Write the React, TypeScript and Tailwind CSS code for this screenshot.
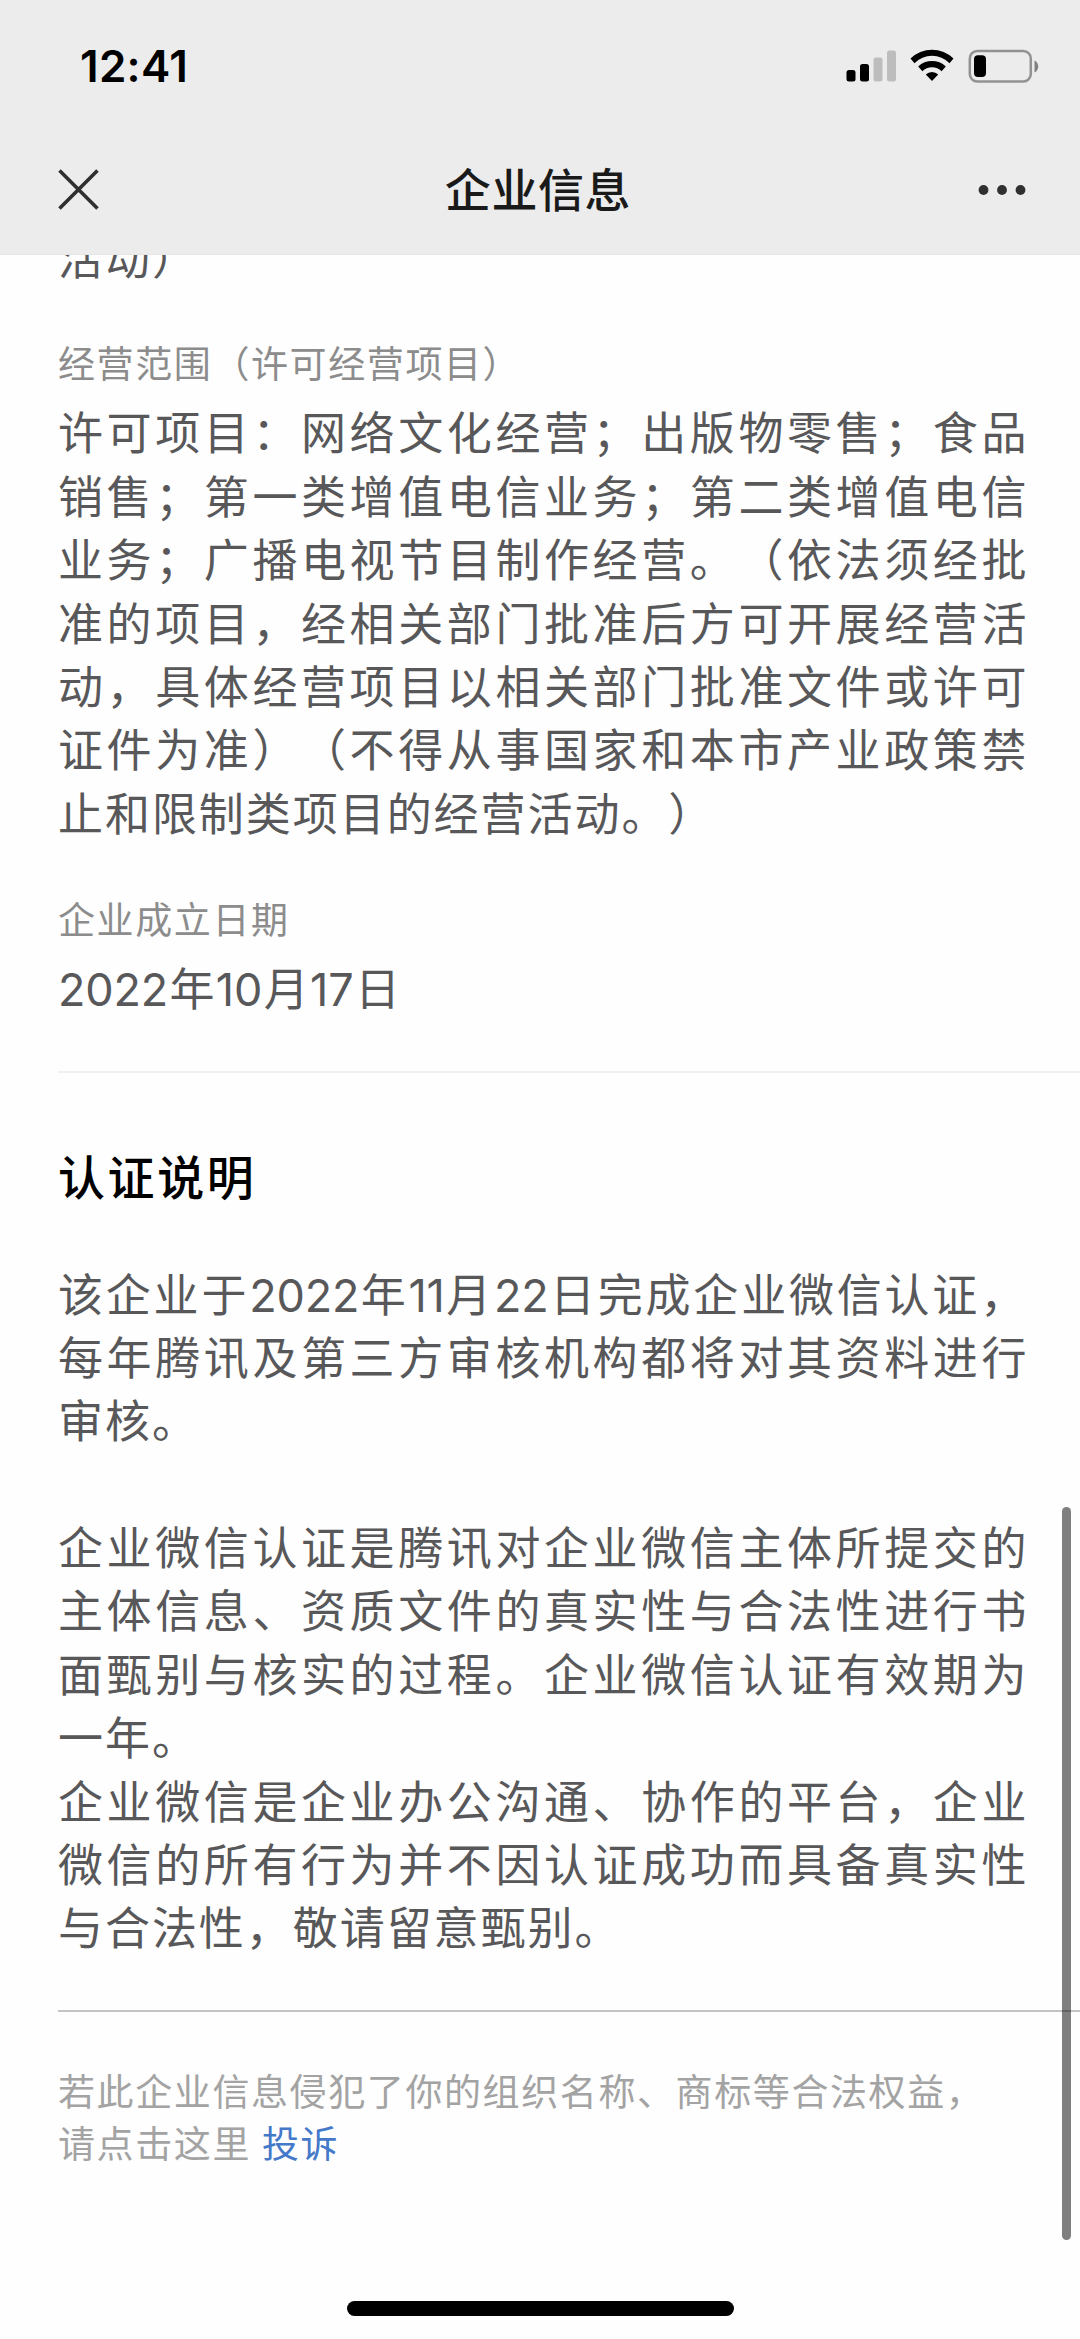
const scope = [
  '许可项目：网络文化经营；出版物零售；食品',
  '销售；第一类增值电信业务；第二类增值电信',
  '业务；广播电视节目制作经营。（依法须经批',
  '准的项目，经相关部门批准后方可开展经营活',
  '动，具体经营项目以相关部门批准文件或许可',
  '证件为准）（不得从事国家和本市产业政策禁',
];

const process = [
  '企业微信认证是腾讯对企业微信主体所提交的',
  '主体信息、资质文件的真实性与合法性进行书',
  '面甄别与核实的过程。企业微信认证有效期为',
];

const platform = [
  '企业微信是企业办公沟通、协作的平台，企业',
  '微信的所有行为并不因认证成功而具备真实性',
];

function Full({ children }: { children: string }) {
  return <span className="block tracking-[3.6px]">{children}</span>;
}

/** The closing line of a paragraph, set at its natural width. */
function Last({ children }: { children: string }) {
  return <span className="block tracking-[1.95px]">{children}</span>;
}

/** Digits inside Chinese text, with tighter tracking. */
function Num({ children }: { children: string }) {
  return <span className="mr-[1.5px] tracking-[-0.2px]">{children}</span>;
}

function StatusBar() {
  return (
    <div className="flex h-[132px] items-center justify-between pl-[80px] pr-[40px]">
      <span className="text-[44px] font-semibold leading-none tracking-[0.3px] text-black">12:41</span>
      <svg width="194" height="36" viewBox="0 0 194 36" fill="none">
        <rect x="0.500" y="22" width="9" height="11.500" rx="2.500" fill="#000" />
        <rect x="14" y="16" width="9" height="17.500" rx="2.500" fill="#000" />
        <rect x="27.500" y="9.500" width="9" height="24" rx="2.500" fill="#bdbdbd" />
        <rect x="41" y="2.500" width="9" height="31" rx="2.500" fill="#bdbdbd" />
        <path d="M64.500 10.500a30.500 30.500 0 0 1 43 0l-4 4.700a24.500 24.500 0 0 0-35 0Z" fill="#000" />
        <path d="M72.200 18.600a19.500 19.500 0 0 1 27.600 0l-4.200 4.600a13.500 13.500 0 0 0-19.200 0Z" fill="#000" />
        <path d="M79.800 26.600a8.600 8.600 0 0 1 12.400 0L86 33Z" fill="#000" />
        <rect x="123.800" y="3" width="61" height="30.500" rx="7.500" stroke="#929292" strokeWidth="2.500" />
        <rect x="128" y="7.300" width="12" height="21.800" rx="4" fill="#000" />
        <path d="M188.500 12.500c5 2 5 10 0 12Z" fill="#808080" />
      </svg>
    </div>
  );
}

function NavBar() {
  return (
    <div className="flex h-[122px] items-center justify-between pb-[7px] pl-[58px] pr-[54px]">
      <svg width="41" height="41" viewBox="0 0 41 41" stroke="#2f2f2f" strokeWidth="3.600">
        <path d="M1.500 1.500 39.500 39.500M39.500 1.500 1.500 39.500" />
      </svg>
      <h1 className="-ml-px text-[46px] font-medium leading-none tracking-[0.600px] text-[#1a1a1a]">企业信息</h1>
      <svg className="mt-px" width="48" height="12" viewBox="0 0 48 12" fill="#303030">
        <circle cx="5.500" cy="6" r="4.900" />
        <circle cx="24" cy="6" r="4.900" />
        <circle cx="42.500" cy="6" r="4.900" />
      </svg>
    </div>
  );
}

export default function App() {
  return (
    <div className="relative flex h-[2339px] w-[1080px] flex-col overflow-hidden bg-[#fefefe] font-['Inter','Noto_Sans_CJK_SC',sans-serif] [text-spacing-trim:space-all]">
      <header className="z-10 h-[255px] shrink-0 border-b border-[#e4e4e4] bg-[#ececec]">
        <StatusBar />
        <NavBar />
      </header>

      <main className="-mt-[28px] flex flex-col whitespace-nowrap pl-[58px] text-[45px] leading-[63.4px] text-[#58585a]">
        <p><Last>活动）</Last></p>

        <section className="mt-[49px]">
          <h2 className="text-[37px] leading-[52px] tracking-[1.6px] text-[#8c8c8c]">经营范围（许可经营项目）</h2>
          <p className="mt-[11px]">
            {scope.map((line) => <Full key={line}>{line}</Full>)}
            <Last>止和限制类项目的经营活动。）</Last>
          </p>
        </section>

        <section className="mt-[49px]">
          <h2 className="text-[37px] leading-[52px] tracking-[1.6px] text-[#8c8c8c]">企业成立日期</h2>
          <p className="mt-[11px] tracking-[1.4px]">
            <Num>2022</Num>年<Num>10</Num>月<Num>17</Num>日
          </p>
        </section>

        <div className="mt-[49px] h-[2px] bg-[#f0f0f0]" />

        <section className="mt-[69px]">
          <h2 className="text-[47px] font-medium leading-[72px] tracking-[2.600px] text-black">认证说明</h2>
          <p className="mt-[50px]">
            <span className="block tracking-[2.800px]">
              该企业于<Num>2022</Num>年<Num>11</Num>月<Num>22</Num>日完成企业微信认证，
            </span>
            <Full>每年腾讯及第三方审核机构都将对其资料进行</Full>
            <Last>审核。</Last>
          </p>
          <p className="mt-[63px]">
            {process.map((line) => <Full key={line}>{line}</Full>)}
            <Last>一年。</Last>
          </p>
          <p>
            {platform.map((line) => <Full key={line}>{line}</Full>)}
            <Last>与合法性，敬请留意甄别。</Last>
          </p>
        </section>

        <div className="mt-[49px] h-[2px] bg-[#c4c4c4]" />

        <p className="mt-[55px] text-[37px] leading-[52px] tracking-[1.6px] text-[#a3a3a3]">
          若此企业信息侵犯了你的组织名称、商标等合法权益，
          <br />
          请点击这里 <a className="-ml-px text-[#4478c9]">投诉</a>
        </p>
      </main>

      <div className="absolute left-[1062px] top-[1507px] h-[733px] w-[9px] rounded-full bg-black/50" />
      <div className="absolute bottom-[23px] left-[347px] h-[15px] w-[387px] rounded-full bg-black" />
    </div>
  );
}
